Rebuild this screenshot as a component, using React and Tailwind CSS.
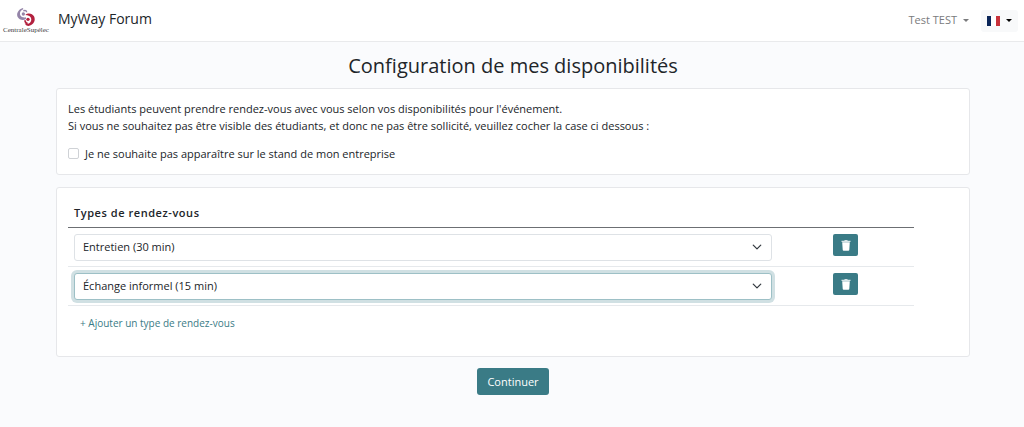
import { useState } from 'react';

const meetingTypes = [
    { value: 'interview', label: 'Entretien (30 min)' },
    { value: 'informal', label: 'Échange informel (15 min)' },
];

function Logo() {
    return (
        <a href="#" className="flex w-12 flex-col items-center text-[#3c3c40]">
            <svg viewBox="0 0 54 54" className="h-[18px] w-[18px]" fill="none">
                <path d="M18 0C4 4-3 17 2 27c5 9 16 12 25 6v-5c-7 2-14 0-17-6-3-8 0-14 9-18z" fill="#9484a8" />
                <path d="M19 9c5-3 10-1 10 4" stroke="#9484a8" strokeWidth="4" />
                <circle cx="19" cy="18" r="5" fill="#9484a8" />
                <path d="M25 21c8-8 21-5 26 4 6 12-1 26-16 29-6 0-10-3-12-8 6 3 13 2 17-3 5-7 3-15-3-19-4-2-8-3-12-3z" fill="#b3213f" />
                <path d="M24 37c0 5 3 9 8 10" stroke="#b3213f" strokeWidth="5" />
                <circle cx="33" cy="34" r="5" fill="#b3213f" />
            </svg>
            <span className="font-['Liberation_Serif',serif] text-[7px] leading-[8px]">CentraleSupélec</span>
        </a>
    );
}

function Caret() {
    return (
        <svg viewBox="0 0 6 3" className="h-[3px] w-1.5" fill="currentColor">
            <path d="M0 0h6L3 3z" />
        </svg>
    );
}

function FrenchFlag() {
    return (
        <svg viewBox="0 0 13 10" className="h-2.5 w-[13px]">
            <path d="M0 0h4v10H0z" fill="#0a2558" />
            <path d="M4 0h5v10H4z" fill="#fff" />
            <path d="M9 0h4v10H9z" fill="#c8313a" />
        </svg>
    );
}

function TrashIcon() {
    return (
        <svg viewBox="0 0 10 11" className="h-[11px] w-2.5" fill="currentColor">
            <path d="M3.5 0h3v.7H9.5v1.2H.5V.7h3z" opacity=".8" />
            <path d="M1.2 2.3h7.6L8.3 9.8q0 1-1 1H2.7q-1 0-1-1z" />
        </svg>
    );
}

function TypeSelect({ value, index, focused, onFocus, onChange }) {
    return (
        <div className="relative">
            <select
                aria-label={`Type de rendez-vous ${index + 1}`}
                value={value}
                onFocus={onFocus}
                onChange={onChange}
                className={
                    'block h-[27px] w-full appearance-none rounded-[3px] border bg-white px-2 text-[11px] outline-none ' +
                    (focused ? 'border-[#9dc0c6] ring-3 ring-[#d0e0e3]' : 'border-[#dee2e6]')
                }
            >
                {meetingTypes.map((type) => (
                    <option key={type.value} value={type.value}>{type.label}</option>
                ))}
            </select>
            <svg viewBox="0 0 16 16" className="pointer-events-none absolute top-2 right-2.5 size-2.5" fill="none">
                <path d="m2 5 6 6 6-6" stroke="#343a40" strokeWidth="2" strokeLinecap="round" strokeLinejoin="round" />
            </svg>
        </div>
    );
}

export default function App() {
    const [hidden, setHidden] = useState(false);
    const [rows, setRows] = useState([
        { id: 1, type: 'interview' },
        { id: 2, type: 'informal' },
    ]);
    const [activeRow, setActiveRow] = useState(2);

    const addRow = () => {
        setRows((prev) => [...prev, { id: Date.now(), type: 'interview' }]);
    };

    const removeRow = (id) => {
        setRows((prev) => prev.filter((row) => row.id !== id));
    };

    const changeType = (id, type) => {
        setRows((prev) => prev.map((row) => (row.id === id ? { ...row, type } : row)));
    };

    return (
        <div className="min-h-screen bg-[#fafbfd] font-['Open_Sans',sans-serif] text-[11px] text-[#212529]">
            <header className="flex h-[42px] items-center justify-between border-b border-[#e9eaec] bg-white pr-1.5 pl-0.5">
                <div className="flex items-center gap-2">
                    <Logo />
                    <a href="#" className="pb-1 text-sm">MyWay Forum</a>
                </div>
                <div className="flex items-center gap-2">
                    <button type="button" className="flex items-center gap-1.5 px-1 text-[#7a7b7d]">
                        Test TEST
                        <Caret />
                    </button>
                    <button
                        type="button"
                        aria-label="Langue"
                        className="flex h-[22px] items-center gap-1.5 rounded-[3px] bg-[#f8f9fa] px-1.5 text-black"
                    >
                        <FrenchFlag />
                        <Caret />
                    </button>
                </div>
            </header>

            <main className="mx-auto w-full max-w-[1140px] pr-[54px] pl-14 pt-2.5 pb-8">
                <h1 className="mb-2 text-center text-xl leading-7">Configuration de mes disponibilités</h1>

                <section className="mb-3 rounded-[3px] border border-[#e6e7ea] bg-white px-[11px] pt-[11px] pb-[11px]">
                    <p className="mb-2.5 leading-[17px]">
                        Les étudiants peuvent prendre rendez-vous avec vous selon vos disponibilités pour l'événement.
                        <br />
                        Si vous ne souhaitez pas être visible des étudiants, et donc ne pas être sollicité, veuillez cocher la case ci dessous :
                    </p>
                    <label className="flex items-center gap-1.5 leading-[19px]">
                        <input
                            type="checkbox"
                            checked={hidden}
                            onChange={(e) => setHidden(e.target.checked)}
                            className="size-[11px] appearance-none rounded-[2px] border border-[#cfd2d6] bg-white checked:bg-[#3a7b86]"
                        />
                        Je ne souhaite pas apparaître sur le stand de mon entreprise
                    </label>
                </section>

                <section className="mb-[11px] rounded-[3px] border border-[#e6e7ea] bg-white px-[11px] pt-[11px] pb-6">
                    <table className="w-[95%] table-fixed border-collapse">
                        <thead>
                            <tr className="border-b border-[#6c6f73]">
                                <th className="w-[84%] px-1.5 pt-[5px] pb-[5px] text-left leading-[18px] font-semibold tracking-wider">
                                    Types de rendez-vous
                                </th>
                                <td></td>
                            </tr>
                        </thead>
                        <tbody>
                            {rows.map((row, index) => (
                                <tr key={row.id} className="border-b border-[#e6e9ec]">
                                    <td className="px-1.5 pt-1.5 pb-[5px]">
                                        <TypeSelect
                                            value={row.type}
                                            index={index}
                                            focused={row.id === activeRow}
                                            onFocus={() => setActiveRow(row.id)}
                                            onChange={(e) => changeType(row.id, e.target.value)}
                                        />
                                    </td>
                                    <td className="pt-1.5 align-top">
                                        <button
                                            type="button"
                                            aria-label="Supprimer"
                                            onClick={() => removeRow(row.id)}
                                            className="mx-auto flex h-[22px] w-[25px] items-center justify-center rounded-[2px] bg-[#3a7b86] text-white"
                                        >
                                            <TrashIcon />
                                        </button>
                                    </td>
                                </tr>
                            ))}
                        </tbody>
                    </table>
                    <button type="button" onClick={addRow} className="mt-2 block px-3 text-[10px] leading-[18px] text-[#3a7b86]">
                        + Ajouter un type de rendez-vous
                    </button>
                </section>

                <button type="button" className="mx-auto block rounded-[3px] bg-[#3a7b86] px-2.5 py-1 leading-[19px] text-white">
                    Continuer
                </button>
            </main>
        </div>
    );
}
